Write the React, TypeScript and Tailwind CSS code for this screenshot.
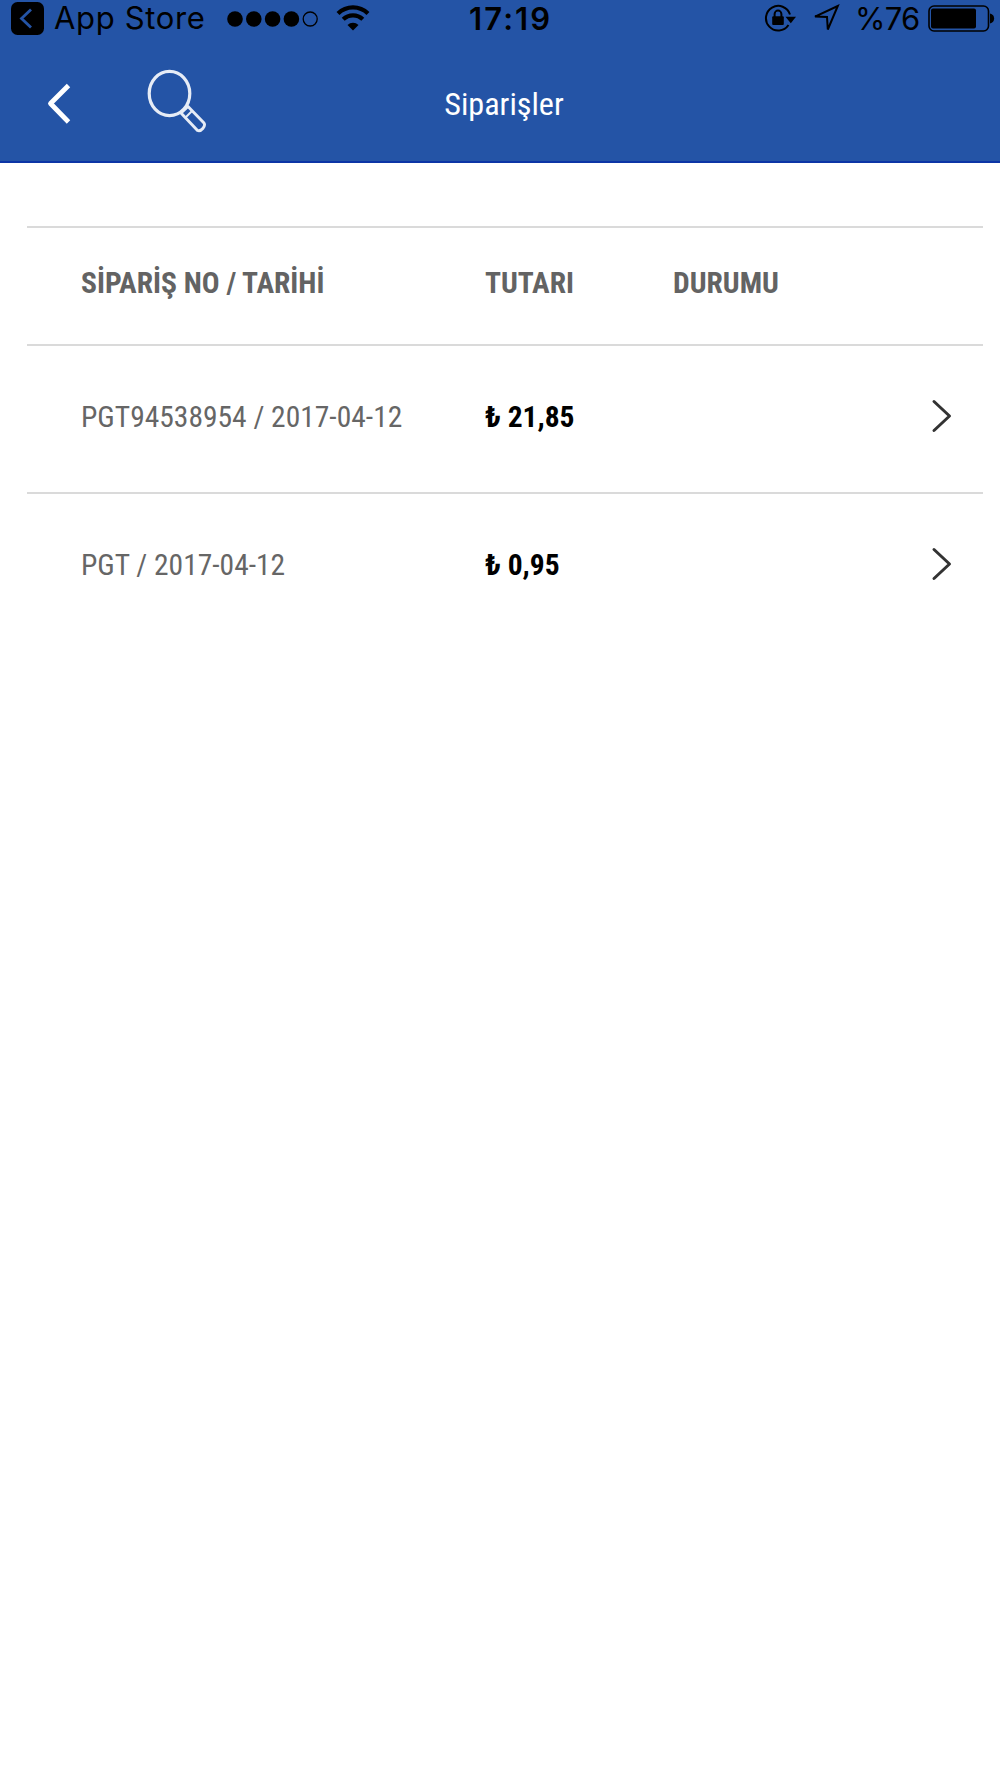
const orders = [
  { id: 'PGT94538954 / 2017-04-12', total: '₺ 21,85' },
  { id: 'PGT / 2017-04-12', total: '₺ 0,95' },
];

const StatusBar = () => (
  <div className="flex h-9 items-center font-[Inter,sans-serif] text-[31px] leading-9 text-black">
    <svg viewBox="0 0 33 33" className="ml-[11px] h-[33px] w-[33px] shrink-0">
      <rect width="33" height="33" rx="6.5" />
      <path d="M20 7.5 10.5 16.5 20 25.5" fill="none" stroke="#2454a6" strokeWidth="2.8" />
    </svg>
    <span className="ml-[10px] w-[173px] whitespace-nowrap tracking-[0.65px]">App Store</span>
    <svg viewBox="0 0 92 16" className="mt-px h-4 w-[92px] shrink-0">
      <circle cx="8" cy="8" r="7.8" />
      <circle cx="26.8" cy="8" r="7.8" />
      <circle cx="45.6" cy="8" r="7.8" />
      <circle cx="64.4" cy="8" r="7.8" />
      <circle cx="83.2" cy="8" r="7" fill="none" stroke="black" strokeWidth="1.3" />
    </svg>
    <svg viewBox="0 0 34 26" className="ml-[17px] h-[26px] w-[34px] shrink-0" fill="none" stroke="black" strokeWidth="4.2">
      <path d="M2 8.5a21.5 21.5 0 0 1 30 0" />
      <path d="M7.2 14.3a14 14 0 0 1 19.6 0" />
      <path d="M11.5 20a8 8 0 0 1 11 0L17 25.5z" fill="black" stroke="none" />
    </svg>
    <span className="ml-[99px] mt-0.5 w-[295px] whitespace-nowrap font-semibold tracking-[2.1px]">17:19</span>
    <svg viewBox="0 0 32 28" className="h-7 w-8 shrink-0" fill="none" stroke="black" strokeWidth="2">
      <path d="M26 10.5A12.3 12.3 0 1 0 24.5 21" />
      <path d="M21.5 12.8h10.5L26.8 19.2z" fill="black" stroke="none" />
      <rect x="8.2" y="12.3" width="11.6" height="8.7" rx="1" fill="black" stroke="none" />
      <path d="M10.6 13V10a3.4 3.4 0 0 1 6.8 0v3" />
    </svg>
    <svg viewBox="0 0 28 28" className="ml-4 h-7 w-7 shrink-0" fill="none" stroke="black" strokeWidth="2">
      <path d="M25.8 2 3 12.6l12 .4.8 12.5z" />
    </svg>
    <span className="ml-[15px] mt-0.5 w-[73px] whitespace-nowrap tracking-[-0.8px]">%76</span>
    <svg viewBox="0 0 67 27" className="mt-px h-[27px] w-[67px] shrink-0">
      <rect x="1" y="1" width="59.5" height="25" rx="5" fill="none" stroke="black" strokeWidth="1.6" />
      <rect x="3" y="3.5" width="45" height="20" rx="2" />
      <path d="M62 8.5c5.5 1 5.5 9 0 10z" />
    </svg>
  </div>
);

const Chevron = () => (
  <svg viewBox="0 0 22 34" className="h-[34px] w-[22px]" fill="none" stroke="#333333" strokeWidth="3" strokeLinecap="round" strokeLinejoin="round">
    <path d="M3 2.5 18.5 17 3 31.5" />
  </svg>
);

const App = () => (
  <div className="min-h-[1778px] w-full bg-white font-['Roboto_Condensed',Roboto,sans-serif] font-stretch-condensed">
    <header className="h-[163px] border-b-2 border-[#0c35a6] bg-[#2454a6]">
      <StatusBar />
      <div className="grid h-[125px] grid-cols-[1fr_auto_1fr] items-center">
        <div className="flex items-center">
          <svg viewBox="0 0 26 42" className="ml-[46px] mt-[11px] h-[42px] w-[26px]" fill="none" stroke="white" strokeWidth="4.8" strokeLinejoin="round">
            <path d="M22.5 2.5 4.5 20.5l18 18.5" />
          </svg>
          <svg viewBox="0 0 60 66" className="ml-[75px] mt-[7px] h-[66px] w-[60px]" fill="none" stroke="#e6ecf6" strokeWidth="3.2" strokeLinejoin="round">
            <ellipse cx="22.5" cy="24.5" rx="20.3" ry="22.1" />
            <path d="M34 44 41 37.5l16 16.5c2 3-3 9-6.5 7.5z" strokeWidth="2.9" />
            <path d="M38.5 48.5 45 42" strokeWidth="2" />
          </svg>
        </div>
        <h1 className="ml-2 mt-[10px] text-[32.2px] leading-10 text-white">Siparişler</h1>
      </div>
    </header>
    <main className="ml-[27px] mr-[17px] pt-[63px]">
      <div className="flex h-[118px] items-center border-t-2 border-[#dadada] pb-1.5 pl-[54px] text-[29.5px] font-bold text-[#636363]">
        <span className="w-[404px]">SİPARİŞ NO / TARİHİ</span>
        <span className="w-[188px]">TUTARI</span>
        <span>DURUMU</span>
      </div>
      {orders.map((order) => (
        <div key={order.id} className="flex h-[148px] items-center border-t-2 border-[#dadada] pb-[3px] pl-[54px] text-[29.5px]">
          <span className="w-[404px] text-[#666666]">{order.id}</span>
          <span className="flex-1 font-bold text-black">{order.total}</span>
          <div className="mb-[3px] mr-[30px]">
            <Chevron />
          </div>
        </div>
      ))}
    </main>
  </div>
);

export default App;
